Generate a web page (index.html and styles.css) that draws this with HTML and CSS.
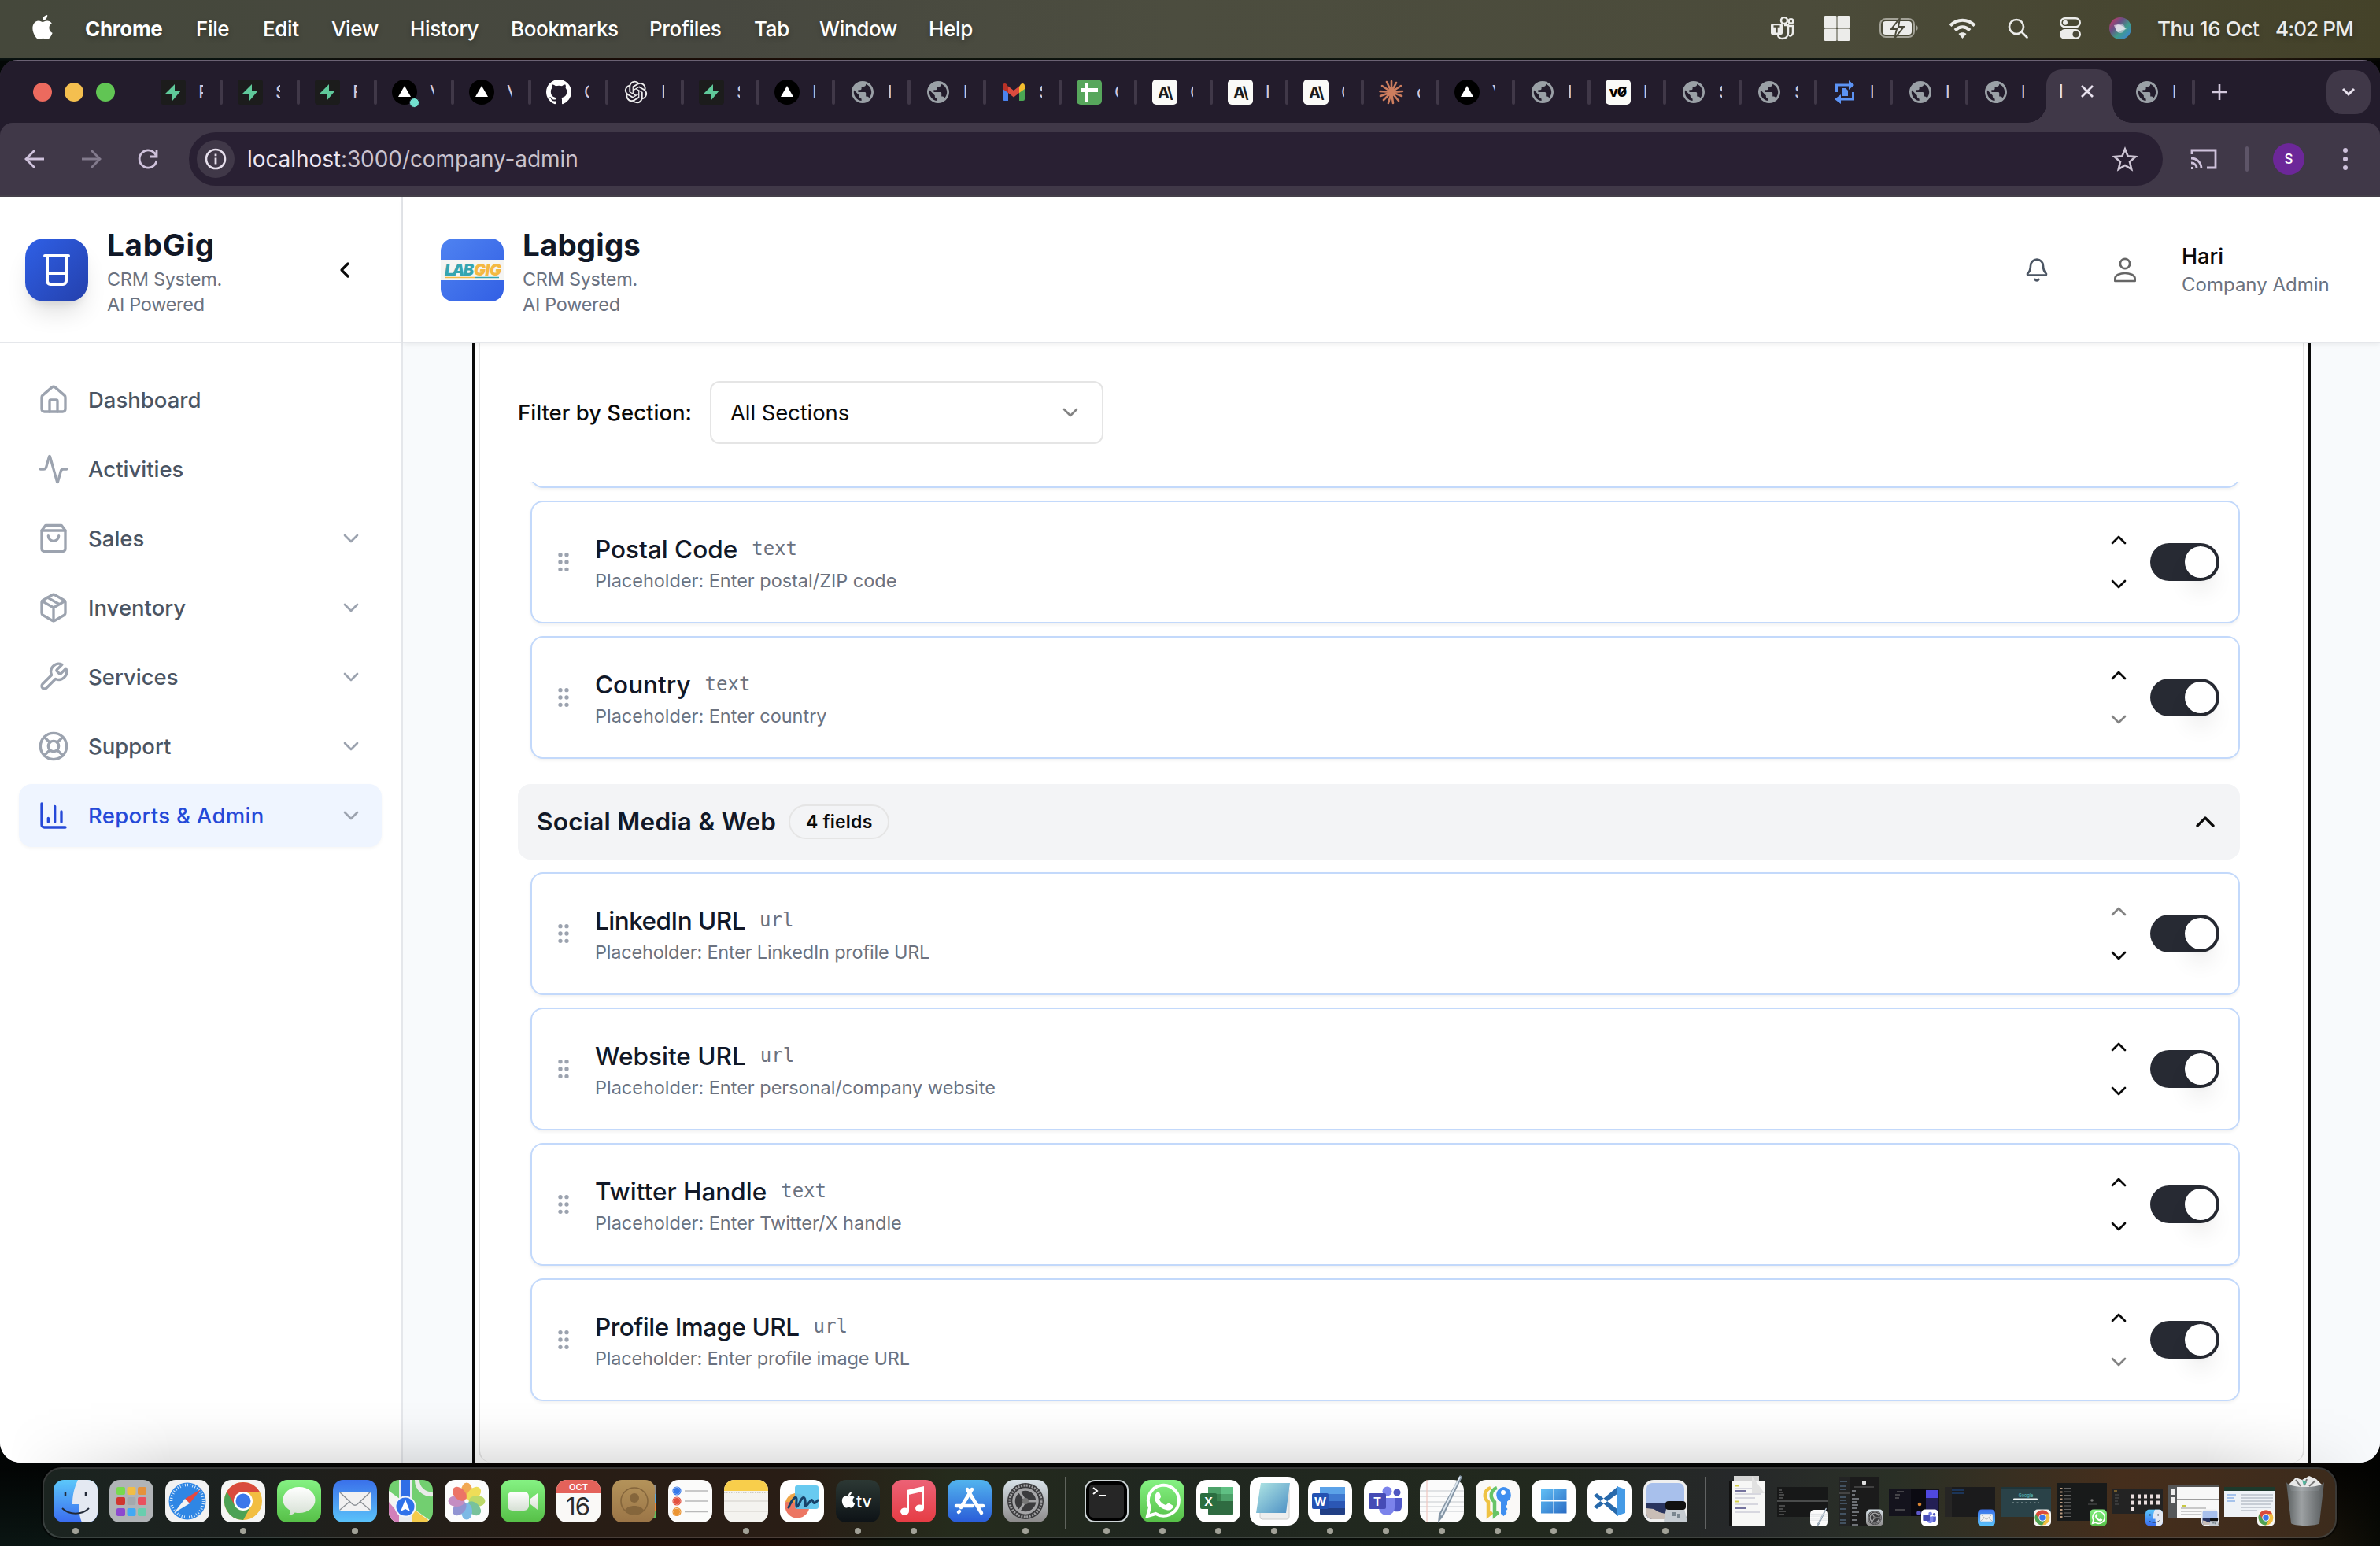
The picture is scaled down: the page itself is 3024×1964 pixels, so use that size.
FILE: index.html
```html
<!DOCTYPE html>
<html lang="en">
<head>
<meta charset="utf-8">
<title>LabGig - Company Admin</title>
<link rel="stylesheet" href="styles.css">
</head>
<body>
<svg class="sprite" aria-hidden="true">
  <defs>
    <linearGradient id="g-blue" x1="0" y1="0" x2="0" y2="1"><stop offset="0" stop-color="#5cc8fa"/><stop offset="1" stop-color="#3a6cf0"/></linearGradient>
    <linearGradient id="g-mail" x1="0" y1="0" x2="0" y2="1"><stop offset="0" stop-color="#3a70ea"/><stop offset="1" stop-color="#5bc3fa"/></linearGradient>
    <linearGradient id="g-green" x1="0" y1="0" x2="0" y2="1"><stop offset="0" stop-color="#85f283"/><stop offset="1" stop-color="#56bf47"/></linearGradient>
    <linearGradient id="g-store" x1="0" y1="0" x2="0" y2="1"><stop offset="0" stop-color="#52b4ee"/><stop offset="1" stop-color="#2a5cd8"/></linearGradient>
    <linearGradient id="g-red" x1="0" y1="0" x2="0" y2="1"><stop offset="0" stop-color="#ec6276"/><stop offset="1" stop-color="#e63c44"/></linearGradient>
    <linearGradient id="g-grey" x1="0" y1="0" x2="0" y2="1"><stop offset="0" stop-color="#d8e2e8"/><stop offset="1" stop-color="#8c8a8a"/></linearGradient>
    <linearGradient id="g-tv" x1="0" y1="0" x2="0" y2="1"><stop offset="0" stop-color="#2c3834"/><stop offset="1" stop-color="#0d1216"/></linearGradient>
    <linearGradient id="g-gold" x1="0" y1="0" x2="0" y2="1"><stop offset="0" stop-color="#b4935a"/><stop offset="1" stop-color="#9b7547"/></linearGradient>
    <linearGradient id="g-white" x1="0" y1="0" x2="0" y2="1"><stop offset="0" stop-color="#fff"/><stop offset="1" stop-color="#d6e0d4"/></linearGradient>
    <linearGradient id="g-win" x1="0" y1="0" x2="1" y2="1"><stop offset="0" stop-color="#62c0f6"/><stop offset="1" stop-color="#2a6cc4"/></linearGradient>
    <linearGradient id="g-note" x1="0" y1="0" x2="1" y2="1"><stop offset="0" stop-color="#b0e6e4"/><stop offset="1" stop-color="#4c8fc4"/></linearGradient>
    <linearGradient id="g-trash" x1="0" y1="0" x2="1" y2="0"><stop offset="0" stop-color="#5c6264"/><stop offset=".4" stop-color="#a2a7aa"/><stop offset="1" stop-color="#5a5f62"/></linearGradient>
    <linearGradient id="g-siri" x1="0" y1="0" x2="1" y2="1"><stop offset="0" stop-color="#d8365c"/><stop offset=".35" stop-color="#6a4f86"/><stop offset=".6" stop-color="#3f9c8a"/><stop offset="1" stop-color="#3b7be8"/></linearGradient>
    <clipPath id="c-app"><rect width="56" height="54" rx="13"/></clipPath>
  </defs>

  <!-- favicons -->
  <symbol id="f-supa" viewBox="0 0 32 32"><rect width="32" height="32" rx="4" fill="#1c1c1c"/><path d="M18 6v8h8L15 27v-9H6z" fill="#5fc99a"/></symbol>
  <symbol id="f-vercel" viewBox="0 0 32 32"><circle cx="16" cy="16" r="16" fill="#000"/><path d="M16 8l8 14H8z" fill="#fff"/></symbol>
  <symbol id="f-github" viewBox="0 0 16 16"><path fill="#fff" d="M8 0C3.580 0 0 3.580 0 8c0 3.540 2.290 6.530 5.470 7.590.4.070.55-.17.55-.38 0-.19-.01-.82-.01-1.490-2.010.37-2.530-.49-2.690-.94-.09-.23-.48-.94-.82-1.130-.28-.15-.68-.52-.01-.53.63-.01 1.080.58 1.230.82.72 1.210 1.870.87 2.330.66.07-.52.28-.87.51-1.070-1.780-.2-3.640-.89-3.640-3.950 0-.87.31-1.590.82-2.150-.08-.2-.36-1.020.08-2.120 0 0 .67-.21 2.200.82.64-.18 1.320-.27 2-.27.68 0 1.360.09 2 .27 1.530-1.040 2.200-.82 2.200-.82.44 1.100.16 1.920.08 2.120.51.56.82 1.270.82 2.150 0 3.070-1.870 3.750-3.650 3.950.29.25.54.73.54 1.480 0 1.070-.01 1.930-.01 2.200 0 .21.15.46.55.38A8.013 8.013 0 0016 8c0-4.420-3.580-8-8-8z"/></symbol>
  <symbol id="f-openai" viewBox="-1.500 -1.500 27 27"><path fill="#eee" d="M22.2819 9.8211a5.9847 5.9847 0 0 0-.5157-4.9108 6.0462 6.0462 0 0 0-6.5098-2.9A6.0651 6.0651 0 0 0 4.9807 4.1818a5.9847 5.9847 0 0 0-3.9977 2.9 6.0462 6.0462 0 0 0 .7427 7.0966 5.98 5.98 0 0 0 .511 4.9107 6.051 6.051 0 0 0 6.5146 2.9001A5.9847 5.9847 0 0 0 13.2599 24a6.0557 6.0557 0 0 0 5.7718-4.2058 5.9894 5.9894 0 0 0 3.9977-2.9001 6.0557 6.0557 0 0 0-.7475-7.0729zm-9.022 12.6081a4.4755 4.4755 0 0 1-2.8764-1.0408l.1419-.0804 4.7783-2.7582a.7948.7948 0 0 0 .3927-.6813v-6.7369l2.02 1.1686a.071.071 0 0 1 .038.052v5.5826a4.504 4.504 0 0 1-4.4945 4.4944zm-9.6607-4.1254a4.4708 4.4708 0 0 1-.5346-3.0137l.142.0852 4.783 2.7582a.7712.7712 0 0 0 .7806 0l5.8428-3.3685v2.3324a.0804.0804 0 0 1-.0332.0615L9.74 19.9502a4.4992 4.4992 0 0 1-6.1408-1.6464zM2.3408 7.8956a4.485 4.485 0 0 1 2.3655-1.9728V11.6a.7664.7664 0 0 0 .3879.6765l5.8144 3.3543-2.0201 1.1685a.0757.0757 0 0 1-.071 0l-4.8303-2.7865A4.504 4.504 0 0 1 2.3408 7.872zm16.5963 3.8558L13.1038 8.364 15.1192 7.2a.0757.0757 0 0 1 .071 0l4.8303 2.7913a4.4944 4.4944 0 0 1-.6765 8.1042v-5.6772a.79.79 0 0 0-.407-.667zm2.0107-3.0231l-.142-.0852-4.7735-2.7818a.7759.7759 0 0 0-.7854 0L9.409 9.2297V6.8974a.0662.0662 0 0 1 .0284-.0615l4.8303-2.7866a4.4992 4.4992 0 0 1 6.6802 4.66zM8.3065 12.863l-2.02-1.1638a.0804.0804 0 0 1-.038-.0567V6.0742a4.4992 4.4992 0 0 1 7.3757-3.4537l-.142.0805L8.704 5.459a.7948.7948 0 0 0-.3927.6813zm1.0976-2.3654l2.602-1.4998 2.6069 1.4998v2.9994l-2.5974 1.4997-2.6067-1.4997Z"/></symbol>
  <symbol id="f-globe" viewBox="0.570 0.570 22.860 22.860"><path fill="#9aa0a6" d="M12 2C6.480 2 2 6.480 2 12s4.480 10 10 10 10-4.480 10-10S17.520 2 12 2zm-1 17.930c-3.950-.49-7-3.850-7-7.930 0-.62.08-1.210.21-1.790L9 15v1c0 1.100.9 2 2 2v1.930zm6.900-2.540c-.26-.81-1-1.390-1.900-1.390h-1v-3c0-.55-.45-1-1-1H8v-2h2c.55 0 1-.45 1-1V7h2c1.100 0 2-.9 2-2v-.41c2.930 1.190 5 4.060 5 7.410 0 2.080-.8 3.970-2.100 5.390z"/></symbol>
  <symbol id="f-gmail" viewBox="0 0 32 32"><path d="M2 8v17a2 2 0 0 0 2 2h5V13z" fill="#4a83ee"/><path d="M30 8v17a2 2 0 0 1-2 2h-5V13z" fill="#4aa553"/><path d="M23 9v8l7-5V8c0-3-3-4-5-2z" fill="#f3bd2e"/><path d="M9 17V8.500l7 5.500 7-5.500V17l-7 5.500z" fill="#dc4b3e"/><path d="M9 9v8l-7-5V8c0-3 3-4 5-2z" fill="#b93227"/></symbol>
  <symbol id="f-sheets" viewBox="0 0 32 32"><rect width="32" height="32" rx="5" fill="#57a65c"/><path d="M11 4h4v7h12v5H15v12h-4V16H5v-5h6z" fill="#fff"/></symbol>
  <symbol id="f-tile" viewBox="0 0 32 32"><rect width="32" height="32" rx="5" fill="#fafaf7"/></symbol>
  <symbol id="f-claude" viewBox="0 0 32 32"><g stroke="#cc7d5e" stroke-width="2.600" stroke-linecap="round"><path d="M16 16L16 2M16 16L22 4M16 16L28 8M16 16L30 15M16 16L29 21M16 16L25 27M16 16L18 30M16 16L12 30M16 16L6 26M16 16L2 21M16 16L1.500 15M16 16L4 8M16 16L10 3"/></g></symbol>
  <symbol id="f-sync" viewBox="0 0 32 32"><g fill="none" stroke="#5c93f5" stroke-width="3"><path d="M5.500 16V7H23M26.500 16v9H9"/></g><path d="M21 1l7 6-7 6zM11 19l-8 6 8 6z" fill="#5c93f5"/><path d="M12 11h5l3 3v7h-8z" fill="#5c93f5"/></symbol>

  <!-- line icons -->
  <symbol id="i-chev-down" viewBox="0 0 24 24"><path d="m6 9 6 6 6-6"/></symbol>
  <symbol id="i-chev-up" viewBox="0 0 24 24"><path d="m18 15-6-6-6 6"/></symbol>
  <symbol id="i-chev-left" viewBox="0 0 24 24"><path d="m15 18-6-6 6-6"/></symbol>
  <symbol id="i-house" viewBox="0 0 24 24"><path d="M15 21v-8a1 1 0 0 0-1-1h-4a1 1 0 0 0-1 1v8"/><path d="M3 10a2 2 0 0 1 .709-1.528l7-5.999a2 2 0 0 1 2.582 0l7 5.999A2 2 0 0 1 21 10v9a2 2 0 0 1-2 2H5a2 2 0 0 1-2-2z"/></symbol>
  <symbol id="i-activity" viewBox="0 0 24 24"><path d="M22 12h-2.480a2 2 0 0 0-1.930 1.460l-2.350 8.360a.25.25 0 0 1-.48 0L9.240 2.180a.25.25 0 0 0-.48 0l-2.350 8.360A2 2 0 0 1 4.490 12H2"/></symbol>
  <symbol id="i-bag" viewBox="0 0 24 24"><path d="M6 2 3 6v14a2 2 0 0 0 2 2h14a2 2 0 0 0 2-2V6l-3-4Z"/><path d="M3 6h18M16 10a4 4 0 0 1-8 0"/></symbol>
  <symbol id="i-package" viewBox="0 0 24 24"><path d="M11 21.730a2 2 0 0 0 2 0l7-4A2 2 0 0 0 21 16V8a2 2 0 0 0-1-1.730l-7-4a2 2 0 0 0-2 0l-7 4A2 2 0 0 0 3 8v8a2 2 0 0 0 1 1.730z"/><path d="M12 22V12M3.300 7 12 12l8.700-5M7.500 4.270l9 5.150"/></symbol>
  <symbol id="i-wrench" viewBox="0 0 24 24"><path d="M14.700 6.300a1 1 0 0 0 0 1.400l1.600 1.600a1 1 0 0 0 1.400 0l3.770-3.770a6 6 0 0 1-7.940 7.940l-6.910 6.910a2.120 2.120 0 0 1-3-3l6.910-6.910a6 6 0 0 1 7.940-7.940l-3.760 3.760z"/></symbol>
  <symbol id="i-buoy" viewBox="0 0 24 24"><circle cx="12" cy="12" r="10"/><circle cx="12" cy="12" r="4"/><path d="m4.930 4.930 4.240 4.240M14.830 9.170l4.240-4.240M14.830 14.830l4.240 4.240M9.170 14.830l-4.240 4.240"/></symbol>
  <symbol id="i-chart" viewBox="0 0 24 24"><path d="M3 3v16a2 2 0 0 0 2 2h16M18 17V9M13 17V5M8 17v-3"/></symbol>
  <symbol id="i-beaker" viewBox="0 0 24 24"><path d="M4.500 3h15M6 3v16a2 2 0 0 0 2 2h8a2 2 0 0 0 2-2V3M6 14h12"/></symbol>
  <symbol id="i-bell" viewBox="0 0 24 24"><path d="M10.268 21a2 2 0 0 0 3.464 0M3.262 15.326A1 1 0 0 0 4 17h16a1 1 0 0 0 .74-1.673C19.410 13.956 18 12.499 18 8A6 6 0 0 0 6 8c0 4.499-1.411 5.956-2.738 7.326"/></symbol>
  <symbol id="i-user" viewBox="0 0 24 24"><circle cx="12" cy="6" r="4.600"/><path d="M2.500 22.500v-2.300c0-3.400 5-5.200 9.500-5.200s9.500 1.800 9.500 5.200v2.300z"/></symbol>
  <symbol id="i-grip" viewBox="0 0 24 24"><g fill="currentColor"><circle cx="9" cy="5" r="1"/><circle cx="9" cy="12" r="1"/><circle cx="9" cy="19" r="1"/><circle cx="15" cy="5" r="1"/><circle cx="15" cy="12" r="1"/><circle cx="15" cy="19" r="1"/></g></symbol>

  <!-- dock applications -->
  <symbol id="d-finder" viewBox="0 0 56 54"><g clip-path="url(#c-app)"><rect width="56" height="54" fill="url(#g-blue)"/><path d="M31 0c-5 11-7 20-7 31h8c0 9 1 16 4 23h20V0z" fill="#e4e9f2"/><path d="M15 15v6M41 15v6" stroke="#222a38" stroke-width="2.500"/><path d="M11 36c9 9 25 9 34 0" fill="none" stroke="#222a38" stroke-width="2"/></g></symbol>
  <symbol id="d-launch" viewBox="0 0 56 54"><rect width="56" height="54" rx="13" fill="#b1b4b7"/><g><rect x="9" y="9" width="11" height="10" rx="2" fill="#77d94e"/><rect x="22.500" y="9" width="11" height="10" rx="2" fill="#f1bd45"/><rect x="36" y="9" width="11" height="10" rx="2" fill="#e5913b"/><rect x="9" y="22" width="11" height="10" rx="2" fill="#d0352f"/><rect x="22.500" y="22" width="11" height="10" rx="2" fill="#a4a9ad"/><rect x="36" y="22" width="11" height="10" rx="2" fill="#e9505f"/><rect x="9" y="36" width="11" height="10" rx="2" fill="#8c48cf"/><rect x="22.500" y="36" width="11" height="10" rx="2" fill="#42a9f4"/><rect x="36" y="36" width="11" height="10" rx="2" fill="#69ceae"/></g></symbol>
  <symbol id="d-safari" viewBox="0 0 56 54"><rect width="56" height="54" rx="13" fill="#f2f2f2"/><circle cx="28" cy="27" r="23.500" fill="#2f86e4"/><circle cx="28" cy="27" r="20.500" fill="none" stroke="#d5e9fb" stroke-width="3.500" stroke-dasharray="1 2.200"/><path d="M45 12L31 30l-6-6z" fill="#e8483f"/><path d="M11 42l14-18 6 6z" fill="#f3f3f3"/></symbol>
  <symbol id="d-chrome" viewBox="0 0 56 54"><rect width="56" height="54" rx="13" fill="#f5f5f4"/><circle cx="28" cy="27" r="24" fill="#f2be42"/><path d="M28 27L7.200 15A24 24 0 0 0 28 51l10-18z" fill="#4da254"/><path d="M28 15h20.800a24 24 0 0 0-41.600 0l10.400 18z" fill="#d94b3d"/><circle cx="28" cy="27" r="12" fill="#fff"/><circle cx="28" cy="27" r="9.500" fill="#3c77ea"/></symbol>
  <symbol id="d-msg" viewBox="0 0 56 54"><rect width="56" height="54" rx="13" fill="url(#g-green)"/><path d="M28 9c11.500 0 20.500 7.200 20.500 16.500S39.500 42 28 42c-1.800 0-3.600-.2-5.300-.6-2 2-5.200 3.600-8.200 3.600 1.800-1.600 2.800-4 2.600-6.200-5.800-2.800-9.600-7.600-9.600-13.300C7.500 16.200 16.500 9 28 9z" fill="url(#g-white)"/></symbol>
  <symbol id="d-mail" viewBox="0 0 56 54"><rect width="56" height="54" rx="13" fill="url(#g-mail)"/><rect x="8" y="15" width="40" height="24" rx="2.500" fill="#f1f1f1"/><path d="M9 16l16 15q3 2.500 6 0l16-15M9 38l13-11M47 38L34 27" fill="none" stroke="#8a8f94" stroke-width="1.400"/></symbol>
  <symbol id="d-maps" viewBox="0 0 56 54"><g clip-path="url(#c-app)"><rect width="56" height="54" fill="#72cf70"/><path d="M0 14L56 54H0z" fill="#f4f4f2"/><path d="M0 28l22 26H0z" fill="#d27fb9"/><path d="M30 36l24 18H30z" fill="#f4cb4b"/><path d="M36 0a18 18 0 0 0 20 18" fill="none" stroke="#e9ebe8" stroke-width="6"/><path d="M13 0h16v54H13z" fill="#e9ecef"/><path d="M15 0h12v26H15z" fill="#2f6ee6"/><circle cx="21" cy="34" r="13.500" fill="#f1f5fb"/><circle cx="21" cy="34" r="11.500" fill="#2f72ea"/><path d="M21 25l6 15-6-3-6 3z" fill="#fff"/></g></symbol>
  <symbol id="d-photos" viewBox="0 0 56 54"><rect width="56" height="54" rx="13" fill="#fcfcfc"/><g opacity=".85"><ellipse cx="28" cy="14" rx="7" ry="10.500" fill="#f09a36"/><ellipse cx="28" cy="14" rx="7" ry="10.500" fill="#ecd83c" transform="rotate(45 28 27)"/><ellipse cx="28" cy="14" rx="7" ry="10.500" fill="#b2d350" transform="rotate(90 28 27)"/><ellipse cx="28" cy="14" rx="7" ry="10.500" fill="#62b98b" transform="rotate(135 28 27)"/><ellipse cx="28" cy="14" rx="7" ry="10.500" fill="#66aee2" transform="rotate(180 28 27)"/><ellipse cx="28" cy="14" rx="7" ry="10.500" fill="#7f83cb" transform="rotate(225 28 27)"/><ellipse cx="28" cy="14" rx="7" ry="10.500" fill="#bb7ab8" transform="rotate(270 28 27)"/><ellipse cx="28" cy="14" rx="7" ry="10.500" fill="#ea5d4d" transform="rotate(315 28 27)"/></g></symbol>
  <symbol id="d-facetime" viewBox="0 0 56 54"><rect width="56" height="54" rx="13" fill="url(#g-green)"/><rect x="9" y="15" width="27" height="24" rx="6" fill="url(#g-white)"/><path d="M38 24l9-7v21l-9-7z" fill="url(#g-white)"/></symbol>
  <symbol id="d-cal" viewBox="0 0 56 54"><g clip-path="url(#c-app)"><rect width="56" height="54" fill="#faf9f7"/><rect width="56" height="17" fill="#e4625a"/></g></symbol>
  <symbol id="d-contacts" viewBox="0 0 56 54"><path d="M46 6h11v12H46z" fill="#8d8d8d"/><path d="M46 18h11v11H46z" fill="#5ba9de"/><path d="M46 29h11v10H46z" fill="#e8893b"/><path d="M46 39h11v9H46z" fill="#62bd5b"/><rect width="54" height="54" rx="12" fill="url(#g-gold)"/><circle cx="28" cy="27" r="17" fill="none" stroke="#85663c" stroke-width="1.600"/><circle cx="28" cy="23" r="6" fill="#85663c"/><path d="M16 39c3-8 21-8 24 0-6 6-18 6-24 0z" fill="#85663c"/></symbol>
  <symbol id="d-remind" viewBox="0 0 56 54"><rect width="56" height="54" rx="13" fill="#fbfbfa"/><path d="M21 14h29M21 27h29M21 40.500h29" stroke="#b9b9b9" stroke-width="1.300"/><g stroke-width="1.200" fill="#3579ea" stroke="#3579ea"><circle cx="11" cy="14" r="3.400"/><circle cx="11" cy="14" r="5" fill="none"/></g><g stroke-width="1.200" fill="#e4513f" stroke="#e4513f"><circle cx="11" cy="27" r="3.400"/><circle cx="11" cy="27" r="5" fill="none"/></g><g stroke-width="1.200" fill="#ec9534" stroke="#ec9534"><circle cx="11" cy="40.500" r="3.400"/><circle cx="11" cy="40.500" r="5" fill="none"/></g></symbol>
  <symbol id="d-notes" viewBox="0 0 56 54"><g clip-path="url(#c-app)"><rect width="56" height="54" fill="#f4f3ef"/><rect width="56" height="14" fill="#f8ce4b"/><path d="M0 16h56" stroke="#a7a49a" stroke-width="1.200" stroke-dasharray="1.500 1.500"/><path d="M0 27h56M0 40h56" stroke="#d2d0ca" stroke-width="1.200"/></g></symbol>
  <symbol id="d-free" viewBox="0 0 56 54"><rect width="56" height="54" rx="13" fill="#fff"/><circle cx="22" cy="33" r="15.500" fill="#ec7663"/><path d="M7 28a15.500 15.500 0 0 1 12-11l4 12z" fill="#efa547"/><rect x="19" y="7" width="30" height="30" rx="3" fill="#5dc6ef" opacity=".93"/><path d="M11 35c5-12 11-17 10-8s1 9 4 2 6-9 7-3-2 8 1 7 6-9 8-7 1 7 7 0" fill="none" stroke="#17426a" stroke-width="3" stroke-linecap="round"/></symbol>
  <symbol id="d-tv" viewBox="0 0 56 54"><rect width="56" height="54" rx="13" fill="url(#g-tv)"/><use href="#apple" x="6" y="15" width="20" height="21" fill="#fff"/></symbol>
  <symbol id="d-music" viewBox="0 0 56 54"><rect width="56" height="54" rx="13" fill="url(#g-red)"/><path d="M39.500 10v26" fill="none" stroke="#fff" stroke-width="3"/><path d="M19 13l22-5v6.500l-22 5z" fill="#fff"/><path d="M20.500 14v25" stroke="#fff" stroke-width="3"/><ellipse cx="16.500" cy="40" rx="5.500" ry="4.500" fill="#fff"/><ellipse cx="35.500" cy="36" rx="5.500" ry="4.500" fill="#fff"/></symbol>
  <symbol id="d-store" viewBox="0 0 56 54"><rect width="56" height="54" rx="13" fill="url(#g-store)"/><g stroke="#fff" stroke-width="4.500" stroke-linecap="round"><path d="M25 12l18 30M31 12L17 35M11 33h21M39 33h6M14 41l1-1"/></g></symbol>
  <symbol id="d-settings" viewBox="0 0 56 54"><rect width="56" height="54" rx="13" fill="url(#g-grey)"/><circle cx="28" cy="27" r="23" fill="#3b3b3d"/><circle cx="28" cy="27" r="20" fill="none" stroke="#a0a0a2" stroke-width="3" stroke-dasharray="2 1.500"/><circle cx="28" cy="27" r="15" fill="none" stroke="#a5a5a7" stroke-width="3.500"/><path d="M28 27h16M28 27L19 13M28 27l-9 14" stroke="#a5a5a7" stroke-width="3"/><circle cx="28" cy="27" r="4" fill="#777"/></symbol>
  <symbol id="d-term" viewBox="0 0 56 54"><rect width="56" height="54" rx="13" fill="#cdd4d6"/><rect x="2" y="2" width="52" height="50" rx="11" fill="#000"/><rect x="6" y="6" width="44" height="42" rx="5" fill="#262626"/><path d="M11 10l5 4-5 4M19 20h8" fill="none" stroke="#fff" stroke-width="2"/></symbol>
  <symbol id="d-wa" viewBox="0 0 56 54"><rect width="56" height="54" rx="13" fill="url(#g-green)"/><path d="M9 46l3-11a19.500 19.500 0 1 1 7.500 8z" fill="none" stroke="#fff" stroke-width="4"/><path d="M20 17c2-3 4-2 5 1l1 3c.5 1.500-2 3-2 4 2 4 5 6 8 7 1 0 3-3 4-2.500l5 3c2 1-1 6-5 6-9 0-18-9-18-16 0-2 1-4 2-5.500z" fill="#fff"/></symbol>
  <symbol id="d-excel" viewBox="0 0 56 54"><rect width="56" height="54" rx="13" fill="#fff"/><rect x="15" y="9" width="32" height="36" rx="2" fill="#2f6b41"/><path d="M15 9h16v9H15z" fill="#4ca169"/><path d="M31 9h16v9H31z" fill="#5fc083"/><path d="M15 18h16v9H15z" fill="#39834f"/><path d="M31 18h16v9H31z" fill="#4ca169"/><rect x="5" y="17" width="21" height="20" rx="2" fill="#2a6e40"/></symbol>
  <symbol id="d-notepad" viewBox="0 0 62 62"><rect width="62" height="62" rx="14" fill="#fff"/><rect x="13" y="14" width="37" height="40" rx="3" fill="#eee" stroke="#ccc"/><path d="M14 8h37l-5 38H8z" fill="url(#g-note)"/></symbol>
  <symbol id="d-word" viewBox="0 0 56 54"><rect width="56" height="54" rx="13" fill="#fff"/><rect x="15" y="9" width="32" height="36" rx="2" fill="#213f85"/><path d="M15 9h32v9H15z" fill="#5ba2e8"/><path d="M15 18h32v9H15z" fill="#3f79d0"/><path d="M15 27h32v9H15z" fill="#2b57b5"/><rect x="5" y="17" width="21" height="20" rx="2" fill="#2352b2"/></symbol>
  <symbol id="d-teams" viewBox="0 0 56 54"><rect width="56" height="54" rx="13" fill="#fff"/><circle cx="42" cy="16" r="4.500" fill="#4f57c1"/><path d="M36 23h12v11c0 7-8 8-12 4z" fill="#5059c9"/><circle cx="29.500" cy="14.500" r="6" fill="#7b83eb"/><path d="M19 23h20v12c0 13-20 13-20 0z" fill="#7b83eb"/><rect x="6" y="17" width="22" height="20" rx="2" fill="#464bb5"/></symbol>
  <symbol id="d-textedit" viewBox="0 -7 56 63"><rect width="56" height="54" rx="13" fill="#fbfbfb"/><path d="M0 14h56M0 21h56M0 28h56M0 34h56M0 40h56" stroke="#c5c9ce" stroke-width="1.200"/><path d="M9 0v54" stroke="#f0c6c0" stroke-width="1.200"/><path d="M51-6l3 2-24 50-7 9 1-11z" fill="#8394a4"/><path d="M51-4L27 45" stroke="#dbe5ee" stroke-width="2"/></symbol>
  <symbol id="d-keys" viewBox="0 0 56 54"><rect width="56" height="54" rx="13" fill="#faf9f7"/><path d="M19 10c-8 3-10 12-3 18v17l5-4" fill="none" stroke="#efc343" stroke-width="4.500"/><path d="M27 10c-8 3-10 12-3 18v17l5-4" fill="none" stroke="#67c466" stroke-width="4.500"/><path d="M35 9a10 10 0 0 1 5 18.500v4l-2 2.500 2.500 3-2.500 3 1.500 2-4 4-3.500-3V28A10 10 0 0 1 35 9z" fill="#3f8ff0"/><circle cx="35" cy="16" r="3" fill="#fff"/></symbol>
  <symbol id="d-windows" viewBox="0 0 56 54"><rect width="56" height="54" rx="13" fill="#fff"/><path d="M12 11h15.500v15H12zM29 11h15.500v15H29zM12 27.500h15.500v15H12zM29 27.500h15.500v15H29z" fill="url(#g-win)"/></symbol>
  <symbol id="d-code" viewBox="0 0 56 54"><rect width="56" height="54" rx="13" fill="#fff"/><path d="M8 20l4-3 27 21v8zM8 34l4 3 27-20V8z" fill="#2769ab"/><path d="M37 8l11 4v30l-11 4z" fill="#459be6"/></symbol>
  <symbol id="d-preview" viewBox="0 0 56 54"><rect width="56" height="54" rx="13" fill="#efefef"/><rect x="4" y="4" width="48" height="46" rx="7" fill="#a8c0ec"/><path d="M4 29h48v14a7 7 0 0 1-7 7H11a7 7 0 0 1-7-7z" fill="#28345f"/><path d="M4 36l9 1 7 4 8 2v7H11a7 7 0 0 1-7-7z" fill="#c8bdb6"/><path d="M29 37h23l4 15c0 4-30 4-30 0z" fill="#c6ccd2"/><rect x="28" y="27" width="26" height="11" rx="4" fill="#111"/><path d="M36 41h6v5h-6zM43 43h4v5h-4z" fill="#7b8790"/></symbol>
  <symbol id="apple" viewBox="0 0 24 24"><path d="M12.152 6.896c-.948 0-2.415-1.078-3.960-1.040-2.040.027-3.910 1.183-4.961 3.014-2.117 3.675-.546 9.103 1.519 12.090 1.013 1.454 2.208 3.090 3.792 3.039 1.520-.065 2.090-.987 3.935-.987 1.831 0 2.350.987 3.960.948 1.637-.026 2.676-1.480 3.676-2.948 1.156-1.688 1.636-3.325 1.662-3.415-.039-.013-3.182-1.221-3.220-4.857-.026-3.040 2.480-4.494 2.597-4.559-1.429-2.090-3.623-2.324-4.390-2.376-2-.156-3.675 1.090-4.610 1.090zM15.530 3.830c.843-1.012 1.400-2.427 1.245-3.830-1.207.052-2.662.805-3.532 1.818-.78.896-1.454 2.338-1.273 3.714 1.338.104 2.715-.688 3.559-1.701"/></symbol>
</svg>

<div class="desktop">
  <header class="menubar">
    <svg class="menubar-apple"><use href="#apple"/></svg>
    <nav class="menubar-items"><b>Chrome</b><span>File</span><span>Edit</span><span>View</span><span>History</span><span>Bookmarks</span><span>Profiles</span><span>Tab</span><span>Window</span><span>Help</span></nav>
    <div class="menubar-status">
      <svg width="30" height="30" viewBox="0 0 30 30"><g fill="none" stroke="#ececea" stroke-width="2.500"><circle cx="17" cy="5" r="4"/><circle cx="25.500" cy="6" r="2.800"/><path d="M17 11h5v10c0 9-13 9-13 2M23 12h5v8c0 4-3 5-5 4"/></g><rect y="9" width="15" height="14" rx="2" fill="#ececea"/><path d="M3.500 12.500h8M7.500 12.500v8" stroke="#4b4a3a" stroke-width="2.300"/></svg>
      <svg width="32" height="32" viewBox="0 0 32 32" fill="#ececea"><rect width="15.500" height="15.500" rx="1"/><rect x="16.500" width="15.500" height="15.500" rx="1"/><rect y="16.500" width="15.500" height="15.500" rx="1"/><rect x="16.500" y="16.500" width="15.500" height="15.500" rx="1"/></svg>
      <svg width="50" height="26" viewBox="0 0 50 26"><rect x="1" y="1" width="43" height="23" rx="7" fill="none" stroke="#a3a297" stroke-width="2"/><rect x="4" y="4" width="37" height="17" rx="4" fill="#ececea"/><path d="M46.500 9c3 1 3 6 0 7z" fill="#a3a297"/><path d="M26 0L15 14h7l-3 12 12-15h-7z" fill="#ececea" stroke="#4b4a3a" stroke-width="2"/></svg>
      <svg width="35" height="26" viewBox="0 0 35 26"><g fill="none" stroke="#ececea" stroke-width="4.200"><path d="M2 9.500c9-9 22-9 31 0M8 15.500c6-5.500 13-5.500 19 0"/></g><path d="M17.500 26l-5-6c3-2.500 7-2.500 10 0z" fill="#ececea"/></svg>
      <svg width="27" height="27" viewBox="0 0 27 27" fill="none" stroke="#ececea" stroke-width="2.700" stroke-linecap="round"><circle cx="11" cy="11" r="9"/><path d="M17.500 17.500l7 7"/></svg>
      <svg width="27" height="28" viewBox="0 0 27 28"><rect x="1.200" y="1.200" width="24.600" height="11" rx="5.500" fill="none" stroke="#ececea" stroke-width="2.400"/><circle cx="7" cy="6.700" r="3" fill="#ececea"/><rect y="15" width="27" height="13" rx="6.500" fill="#ececea"/><circle cx="20.500" cy="21.500" r="4" fill="#4a4938"/></svg>
      <svg width="28" height="28" viewBox="0 0 28 28"><circle cx="14" cy="14" r="14" fill="url(#g-siri)"/><circle cx="14" cy="14" r="6" fill="#e8d4ea" opacity=".55"/><path d="M6 10q8-3 16 5-8 1-10 4-4-2-6-9z" fill="#fff" opacity=".6"/></svg>
      <span class="menubar-date">Thu 16 Oct</span><span class="menubar-time">4:02 PM</span>
    </div>
  </header>

  <section class="window">
    <div class="tabstrip">
      <div class="lights"><i class="light red"></i><i class="light yellow"></i><i class="light green"></i></div>
      <div class="tabs">
        <div class="tab wide"><svg><use href="#f-supa"/></svg><span>P</span></div>
        <div class="tab wide"><svg><use href="#f-supa"/></svg><span>S</span></div>
        <div class="tab wide"><svg><use href="#f-supa"/></svg><span>F</span></div>
        <div class="tab wide notify"><svg><use href="#f-vercel"/></svg><span>V</span></div>
        <div class="tab wide"><svg><use href="#f-vercel"/></svg><span>V</span></div>
        <div class="tab wide"><svg><use href="#f-github"/></svg><span>G</span></div>
        <div class="tab"><svg><use href="#f-openai"/></svg><span>I</span></div>
        <div class="tab"><svg><use href="#f-supa"/></svg><span>S</span></div>
        <div class="tab"><svg><use href="#f-vercel"/></svg><span>I</span></div>
        <div class="tab"><svg><use href="#f-globe"/></svg><span>l</span></div>
        <div class="tab"><svg><use href="#f-globe"/></svg><span>l</span></div>
        <div class="tab"><svg><use href="#f-gmail"/></svg><span>S</span></div>
        <div class="tab"><svg><use href="#f-sheets"/></svg><span>C</span></div>
        <div class="tab"><svg viewBox="0 0 32 32"><use href="#f-tile"/><text class="fav-a" x="16" y="23.500">A\</text></svg><span>C</span></div>
        <div class="tab"><svg viewBox="0 0 32 32"><use href="#f-tile"/><text class="fav-a" x="16" y="23.500">A\</text></svg><span>l</span></div>
        <div class="tab"><svg viewBox="0 0 32 32"><use href="#f-tile"/><text class="fav-a" x="16" y="23.500">A\</text></svg><span>C</span></div>
        <div class="tab"><svg><use href="#f-claude"/></svg><span>c</span></div>
        <div class="tab"><svg><use href="#f-vercel"/></svg><span>V</span></div>
        <div class="tab"><svg><use href="#f-globe"/></svg><span>l</span></div>
        <div class="tab"><svg viewBox="0 0 32 32"><use href="#f-tile"/><text class="fav-v" x="15.500" y="22">v0</text><path d="M18 21l8-11" stroke="#000" stroke-width="2"/></svg><span>l</span></div>
        <div class="tab"><svg><use href="#f-globe"/></svg><span>S</span></div>
        <div class="tab"><svg><use href="#f-globe"/></svg><span>S</span></div>
        <div class="tab"><svg><use href="#f-sync"/></svg><span>l</span></div>
        <div class="tab"><svg><use href="#f-globe"/></svg><span>l</span></div>
        <div class="tab last"><svg><use href="#f-globe"/></svg><span>l</span></div>
      </div>
      <div class="tab-active"><span>l</span><svg width="18" height="18" viewBox="0 0 18 18"><path d="M2 2l14 14M16 2L2 16" stroke="#e9e3ef" stroke-width="2.800"/></svg></div>
      <div class="tab"><svg><use href="#f-globe"/></svg><span>l</span></div>
      <svg class="tab-new" viewBox="0 0 22 22"><path d="M11 1v20M1 11h20" stroke="#d3c9dd" stroke-width="2.600"/></svg>
      <div class="tab-search"><svg width="18" height="12" viewBox="0 0 18 12"><path d="M2 2l7 7 7-7" fill="none" stroke="#e9e3ef" stroke-width="3"/></svg></div>
    </div>

    <div class="toolbar">
      <div class="toolbar-nav">
        <svg width="28" height="28" viewBox="0 0 28 28" class="tool"><path d="M26 14H3M14 3L3 14l11 11"/></svg>
        <svg width="28" height="28" viewBox="0 0 28 28" class="tool dim"><path d="M2 14h23M14 3l11 11-11 11"/></svg>
        <svg width="28" height="28" viewBox="0 0 28 28" class="tool"><path d="M24 9A11 11 0 1 0 25 16M25 2v9h-9"/></svg>
      </div>
      <div class="omnibox">
        <span class="omnibox-info"><svg width="28" height="28" viewBox="0 0 28 28"><circle cx="14" cy="14" r="12" fill="none" stroke="#e6dfec" stroke-width="2.600"/><path d="M14 12.500v8M14 7.500v2.700" stroke="#e6dfec" stroke-width="2.800"/></svg></span>
        <span class="omnibox-url"><em>localhost</em>:3000/company-admin</span>
        <svg class="omnibox-star" viewBox="0 0 32 32"><path d="M16 3.500l3.700 8.900 9.600.8-7.300 6.300 2.200 9.400-8.200-5-8.200 5 2.200-9.400-7.300-6.300 9.600-.8z" fill="none" stroke="#cdc5d4" stroke-width="2.600"/></svg>
      </div>
      <svg class="tool cast" viewBox="0 0 34 26"><path d="M2 7V2h30v22H21M1 24.500h2M1 18a6.500 6.500 0 0 1 7 7M1 12a13 13 0 0 1 13 13"/></svg>
      <i class="toolbar-sep"></i>
      <span class="avatar">S</span>
      <span class="kebab"><i></i><i></i><i></i></span>
    </div>

    <div class="app">
      <aside class="sidebar">
        <div class="brand">
          <div class="brand-logo"><svg class="line"><use href="#i-beaker"/></svg></div>
          <div class="brand-text"><h1 class="t-labgig">LabGig</h1><p>CRM System.<br>AI Powered</p></div>
          <svg class="line brand-collapse"><use href="#i-chev-left"/></svg>
        </div>
        <nav class="nav">
          <a class="nav-item"><svg class="line"><use href="#i-house"/></svg><span>Dashboard</span></a>
          <a class="nav-item"><svg class="line"><use href="#i-activity"/></svg><span>Activities</span></a>
          <a class="nav-item"><svg class="line"><use href="#i-bag"/></svg><span>Sales</span><svg class="line chev"><use href="#i-chev-down"/></svg></a>
          <a class="nav-item"><svg class="line"><use href="#i-package"/></svg><span>Inventory</span><svg class="line chev"><use href="#i-chev-down"/></svg></a>
          <a class="nav-item"><svg class="line"><use href="#i-wrench"/></svg><span>Services</span><svg class="line chev"><use href="#i-chev-down"/></svg></a>
          <a class="nav-item"><svg class="line"><use href="#i-buoy"/></svg><span>Support</span><svg class="line chev"><use href="#i-chev-down"/></svg></a>
          <a class="nav-item active"><svg class="line"><use href="#i-chart"/></svg><span>Reports &amp; Admin</span><svg class="line chev"><use href="#i-chev-down"/></svg></a>
        </nav>
      </aside>

      <div class="content">
        <header class="topbar">
          <svg class="company-logo" viewBox="0 0 80 80"><defs><linearGradient id="g-co" x1="0" y1="0" x2="1" y2="1"><stop offset="0" stop-color="#4f83f1"/><stop offset="1" stop-color="#325fe4"/></linearGradient></defs><rect width="80" height="80" rx="16" fill="url(#g-co)"/><rect y="27" width="80" height="26" fill="#f5f5f3"/><text class="co-a" x="5" y="47" textLength="37">LAB</text><text class="co-b" x="42" y="47" textLength="35">GIG</text><path d="M5 49.500h38" stroke="#f4b942" stroke-width="1.500"/><path d="M43 49.500h31" stroke="#35a5b0" stroke-width="1.500"/></svg>
          <div class="brand-text"><h1 class="t-labgigs">Labgigs</h1><p>CRM System.<br>AI Powered</p></div>
          <div class="account">
            <svg class="line bell"><use href="#i-bell"/></svg>
            <svg class="line person"><use href="#i-user"/></svg>
            <div class="account-text"><strong>Hari</strong><span>Company Admin</span></div>
          </div>
        </header>

        <main class="main">
          <div class="frame"><div class="panel">
            <div class="filter">
              <label>Filter by Section:</label>
              <div class="select"><span>All Sections</span><svg class="line"><use href="#i-chev-down"/></svg></div>
            </div>
            <div class="fields">
              <div class="field field-cut"></div>
              <div class="field"><svg class="line grip"><use href="#i-grip"/></svg><div class="field-text"><div class="field-title"><h3>Postal Code</h3><code>text</code></div><p>Placeholder: Enter postal/ZIP code</p></div><div class="order"><svg class="line"><use href="#i-chev-up"/></svg><svg class="line"><use href="#i-chev-down"/></svg></div><div class="toggle"><i></i></div></div>
              <div class="field"><svg class="line grip"><use href="#i-grip"/></svg><div class="field-text"><div class="field-title"><h3>Country</h3><code>text</code></div><p>Placeholder: Enter country</p></div><div class="order"><svg class="line"><use href="#i-chev-up"/></svg><svg class="line off"><use href="#i-chev-down"/></svg></div><div class="toggle"><i></i></div></div>
              <div class="section"><h2>Social Media &amp; Web</h2><span class="badge">4 fields</span><svg class="line"><use href="#i-chev-up"/></svg></div>
              <div class="field tight"><svg class="line grip"><use href="#i-grip"/></svg><div class="field-text"><div class="field-title"><h3>LinkedIn URL</h3><code>url</code></div><p>Placeholder: Enter LinkedIn profile URL</p></div><div class="order"><svg class="line off"><use href="#i-chev-up"/></svg><svg class="line"><use href="#i-chev-down"/></svg></div><div class="toggle"><i></i></div></div>
              <div class="field"><svg class="line grip"><use href="#i-grip"/></svg><div class="field-text"><div class="field-title"><h3>Website URL</h3><code>url</code></div><p>Placeholder: Enter personal/company website</p></div><div class="order"><svg class="line"><use href="#i-chev-up"/></svg><svg class="line"><use href="#i-chev-down"/></svg></div><div class="toggle"><i></i></div></div>
              <div class="field"><svg class="line grip"><use href="#i-grip"/></svg><div class="field-text"><div class="field-title"><h3>Twitter Handle</h3><code>text</code></div><p>Placeholder: Enter Twitter/X handle</p></div><div class="order"><svg class="line"><use href="#i-chev-up"/></svg><svg class="line"><use href="#i-chev-down"/></svg></div><div class="toggle"><i></i></div></div>
              <div class="field tight"><svg class="line grip"><use href="#i-grip"/></svg><div class="field-text"><div class="field-title"><h3>Profile Image URL</h3><code>url</code></div><p>Placeholder: Enter profile image URL</p></div><div class="order"><svg class="line"><use href="#i-chev-up"/></svg><svg class="line off"><use href="#i-chev-down"/></svg></div><div class="toggle"><i></i></div></div>
            </div>
          </div></div>
        </main>
      </div>
    </div>
    <div class="window-shade"></div>
  </section>

  <footer class="dock">
    <div class="slot open"><svg><use href="#d-finder"/></svg></div>
    <div class="slot"><svg><use href="#d-launch"/></svg></div>
    <div class="slot"><svg><use href="#d-safari"/></svg></div>
    <div class="slot open"><svg><use href="#d-chrome"/></svg></div>
    <div class="slot"><svg><use href="#d-msg"/></svg></div>
    <div class="slot open"><svg><use href="#d-mail"/></svg></div>
    <div class="slot"><svg><use href="#d-maps"/></svg></div>
    <div class="slot"><svg><use href="#d-photos"/></svg></div>
    <div class="slot"><svg><use href="#d-facetime"/></svg></div>
    <div class="slot"><svg viewBox="0 0 56 54"><use href="#d-cal"/><text class="cal-month" x="28" y="13">OCT</text><text class="cal-day" x="27" y="45">16</text></svg></div>
    <div class="slot"><svg><use href="#d-contacts"/></svg></div>
    <div class="slot"><svg><use href="#d-remind"/></svg></div>
    <div class="slot open"><svg><use href="#d-notes"/></svg></div>
    <div class="slot"><svg><use href="#d-free"/></svg></div>
    <div class="slot open"><svg viewBox="0 0 56 54"><use href="#d-tv"/><text class="tv" x="26" y="35">tv</text></svg></div>
    <div class="slot open"><svg><use href="#d-music"/></svg></div>
    <div class="slot"><svg><use href="#d-store"/></svg></div>
    <div class="slot open"><svg><use href="#d-settings"/></svg></div>
    <i class="dock-sep"></i>
    <div class="slot open"><svg><use href="#d-term"/></svg></div>
    <div class="slot open"><svg><use href="#d-wa"/></svg></div>
    <div class="slot open"><svg viewBox="0 0 56 54"><use href="#d-excel"/><text class="office" x="15.500" y="32.500">X</text></svg></div>
    <div class="slot open"><svg class="big"><use href="#d-notepad"/></svg></div>
    <div class="slot open"><svg viewBox="0 0 56 54"><use href="#d-word"/><text class="office" x="15.500" y="32.500">W</text></svg></div>
    <div class="slot open"><svg viewBox="0 0 56 54"><use href="#d-teams"/><text class="office" x="17" y="32.500">T</text></svg></div>
    <div class="slot open"><svg class="tall"><use href="#d-textedit"/></svg></div>
    <div class="slot open"><svg><use href="#d-keys"/></svg></div>
    <div class="slot open"><svg><use href="#d-windows"/></svg></div>
    <div class="slot open"><svg><use href="#d-code"/></svg></div>
    <div class="slot open"><svg><use href="#d-preview"/></svg></div>
    <i class="dock-sep"></i>
    <div class="slot"><svg class="mini" viewBox="0 0 64 64"><path d="M16 0h32v12H16z" fill="#d4d4d4"/><path d="M10 7h4v57h-4z" fill="#111"/><path d="M14 7h41v57H14z" fill="#f7f7f6"/><path d="M17 12.500h5M17 32.500h5" stroke="#d4cf4a" stroke-width="2"/><path d="M17 19h14M17 41h14" stroke="#4a4780" stroke-width="1.600"/><path d="M17 16h28M17 23h33M17 28h26M17 36h30M17 46h32" stroke="#b7b7c8" stroke-width="1"/><path d="M39 0l16 22H39z" fill="#e1e1e1"/></svg></div>
    <div class="slot"><svg class="mini" viewBox="0 0 64 64"><rect y="14" width="64" height="38" fill="#171818"/><path d="M0 31.500h64" stroke="#4a4c4c" stroke-width="3"/><path d="M2 18h4M2 21h6M2 24h7M2 28h5M2 38h8M2 42h6M2 45h9M2 49h7" stroke="#7b7b7b"/><use href="#d-textedit" x="42" y="40" width="22" height="25"/></svg></div>
    <div class="slot"><svg class="mini" viewBox="0 0 64 64"><rect x="7" y="1" width="51" height="63" fill="#232424"/><path d="M22 1h36v63H22z" fill="#1b1b1b"/><path d="M9 7h9M9 13h8M9 17h7M9 27h8M9 31h8M9 35h9M9 42h7M9 48h8M9 56h7M9 60h8" stroke="#4f6276" stroke-width="1.500"/><path d="M7 22h14" stroke="#444" stroke-width="2"/><path d="M24 19h5M24 24h4M24 29h9M24 33h6M24 37h8M24 41h7M24 46h9M24 50h6M24 56h7M24 62h8" stroke="#8a8f95" stroke-width="1.300"/><rect x="37" y="6" width="5" height="5" rx="1" fill="#ddd"/><path d="M27 14h25" stroke="#666"/><use href="#d-settings" x="42" y="42" width="22" height="22"/></svg></div>
    <div class="slot"><svg class="mini" viewBox="0 0 64 64"><rect y="16" width="64" height="35" fill="#14131d"/><path d="M28 17h19v34H28z" fill="#0b0a12"/><path d="M47 18h16l-1 12H47z" fill="#5048e0"/><path d="M47 28h16v22H47z" fill="#231f55"/><circle cx="39" cy="36" r="2.300" fill="#d98432"/><circle cx="38" cy="47" r="2.800" fill="#5e58c8"/><path d="M10 20h9M8 24h6M8 28h5M8 43h13" stroke="#777"/><use href="#d-teams" x="41" y="42" width="22" height="22"/></svg></div>
    <div class="slot"><svg class="mini" viewBox="0 0 64 64"><rect y="14" width="64" height="38" fill="#1b1b1c"/><path d="M0 14h9v38H0z" fill="#262524"/><path d="M9 18h16M9 22h15" stroke="#1c3558" stroke-width="2"/><use href="#d-mail" x="42" y="42" width="22" height="22"/></svg></div>
    <div class="slot"><svg class="mini" viewBox="0 0 64 64"><rect y="14" width="64" height="38" fill="#2a4248"/><rect y="14" width="64" height="3" fill="#1f3539"/><rect x="16" y="28.500" width="31" height="2.200" rx="1" fill="#f0f4f4"/><text class="goog" x="32" y="26.500">Google</text><path d="M15 34h34" stroke="#9aa" stroke-dasharray="2 3.500"/><use href="#d-chrome" x="42" y="42" width="22" height="22"/></svg></div>
    <div class="slot"><svg class="mini" viewBox="0 0 64 64"><rect y="9" width="64" height="48" fill="#181a1a"/><path d="M6 15v40" stroke="#b99a80" stroke-width="3" stroke-dasharray="2 2.500"/><path d="M14 15v40" stroke="#666" stroke-width="8" stroke-dasharray="1 3.500"/><circle cx="45" cy="31" r="1.800" fill="#777"/><path d="M40 36h11" stroke="#555"/><use href="#d-wa" x="42" y="42" width="22" height="22"/></svg></div>
    <div class="slot"><svg class="mini" viewBox="0 0 64 64"><rect y="17" width="64" height="31" fill="#232323"/><path d="M2 19h4" stroke="#c99b3a"/><path d="M3 24h5M3 28h5M3 32h4M3 36h5" stroke="#555"/><path d="M24 26h38M24 34h38M24 42h6" stroke="#e9dede" stroke-width="5" stroke-dasharray="4 4"/><use href="#d-finder" x="42" y="42" width="22" height="22"/></svg></div>
    <div class="slot"><svg class="mini" viewBox="0 0 64 64"><rect y="12" width="64" height="42" fill="#f8f8f8"/><path d="M0 12h11v42H0z" fill="#55585a"/><path d="M3 17h5v7H3zM3 27h5v7H3z" fill="#eee"/><path d="M11 30h53" stroke="#444"/><path d="M0 13h64" stroke="#555" stroke-width="2"/><path d="M17 38h6" stroke="#c7c842" stroke-width="2"/><path d="M16 41h32M16 45h30M16 49h28" stroke="#999"/><use href="#d-preview" x="42" y="42" width="22" height="22"/></svg></div>
    <div class="slot"><svg class="mini" viewBox="0 0 64 64"><rect y="14" width="64" height="38" fill="#eef2f6"/><rect y="14" width="64" height="5" fill="#1d3a2c"/><path d="M22 24h40M22 28h40M22 32h40M22 36h38M22 40h38M22 44h20" stroke="#9fa8b4"/><path d="M3 24h12M3 28h10M3 32h11" stroke="#8fb4e8" stroke-width="1.500"/><use href="#d-chrome" x="42" y="42" width="22" height="22"/></svg></div>
    <div class="slot"><svg class="mini" viewBox="0 0 64 64"><path d="M12 10l8-8 8 3 9-5 9 4 7 7-4 8H14z" fill="#e7e8e8"/><path d="M20 5l6 8M34 4l-3 8M45 6l-8 7" stroke="#777" stroke-width="2"/><path d="M28 5l6 3-4 4z" fill="#53b39b"/><path d="M8 8l6 52c2 4 34 4 36 0l6-52c-4 8-44 8-48 0z" fill="url(#g-trash)" opacity=".95"/></svg></div>
  </footer>
</div>
</body>
</html>
```

FILE: styles.css
```css
* { box-sizing: border-box; }

html, body { margin: 0; padding: 0; }

body {
  width: 3024px;
  height: 1964px;
  overflow: hidden;
  font-family: "Inter", "Liberation Sans", sans-serif;
  -webkit-font-smoothing: antialiased;
}

h1, h2, h3, p { margin: 0; font-weight: inherit; }

.sprite { position: absolute; width: 0; height: 0; }

.desktop {
  display: flex;
  flex-direction: column;
  width: 3024px;
  height: 1964px;
  background:
    linear-gradient(180deg, transparent 70px, rgba(0, 0, 0, .8) 78px, rgba(0, 0, 0, .85) 1868px, rgba(0, 0, 0, .35) 1964px),
    linear-gradient(90deg, #10211d 0, #12241c 350px, #2a150c 560px, #33180c 1000px, #1b2414 1130px, #17251d 1500px, #1f2c1a 1900px, #1a2219 2200px, #20302c 2500px, #3a2716 2680px, #4a3019 2850px, #0d1008 3024px);
}

/* macOS menu bar */
.menubar {
  display: flex;
  align-items: center;
  height: 74px;
  padding: 0 34px 2px 38px;
  background: linear-gradient(90deg, #45483b 0, #474840 900px, #4c4d3f 1500px, #4b4b3a 2300px, #444229 3024px);
  color: #fff;
  font-size: 26px;
  font-weight: 500;
  letter-spacing: -.35px;
  text-shadow: 0 3px 6px rgba(0, 0, 0, .25);
}
.menubar-apple { width: 32px; height: 31px; fill: #fff; margin-right: 38px; margin-top: -4px; }
.menubar-items { display: grid; grid-template-columns: 141px 85px 87px 100px 128px 176px 133px 83px 139px 60px; }
.menubar-items b { font-weight: 700; }
.menubar-status {
  display: grid;
  grid-template-columns: 68px 70px 88px 75px 66px 63px 61px 150px 99px;
  align-items: center;
  margin-left: auto;
  color: #ececea;
  white-space: nowrap;
}
.menubar-time { letter-spacing: -.9px; }

/* browser window */
.window {
  position: relative;
  display: flex;
  flex-direction: column;
  height: 1782px;
  margin-top: 2px;
  border-radius: 22px 22px 26px 26px;
  overflow: hidden;
  background: #403848;
}
.tabstrip {
  position: relative;
  z-index: 1;
  display: flex;
  align-items: center;
  flex: none;
  height: 80px;
  padding-left: 42px;
  background: #231c2c;
  border-top: 2px solid #6b6274;
}
.lights { display: flex; gap: 16px; width: 162px; }
.light { width: 24px; height: 24px; border-radius: 50%; }
.red { background: #ec6a5e; }
.yellow { background: #f4bf4f; }
.green { background: #61c554; }
.tabs { display: flex; }
.tab { position: relative; display: flex; align-items: center; width: 96px; height: 32px; color: #d3c9dd; }
.tab svg { width: 32px; height: 32px; }
.tab span { width: 4px; margin-left: 16px; overflow: hidden; font-size: 23px; line-height: 32px; }
.tab.wide { width: 98px; }
.tab.wide span { width: 6px; }
.tab::after { content: ""; width: 4px; height: 32px; margin: 0 19px 0 auto; border-radius: 2px; background: #403848; }
.tab.last { width: 80px; }
.tab.last::after { display: none; }
.notify::before { content: ""; position: absolute; left: 22px; top: 23px; width: 11px; height: 11px; border-radius: 50%; background: #73e0cf; border: 1px solid #231c2c; }
.fav-a { font-weight: 700; font-size: 20px; letter-spacing: -1.500px; text-anchor: middle; fill: #1b1b1b; }
.fav-v { font-weight: 800; font-size: 18px; letter-spacing: -1px; text-anchor: middle; fill: #000; }
.tab-active {
  position: relative;
  display: flex;
  align-items: center;
  align-self: flex-end;
  gap: 21px;
  width: 84px;
  height: 68px;
  margin-right: 28px;
  padding: 0 0 12px 16px;
  border-radius: 20px 20px 0 0;
  background: #403848;
  color: #e9e3ef;
}
.tab-active span { width: 6px; overflow: hidden; font-size: 23px; line-height: 32px; }
.tab-active::before, .tab-active::after { content: ""; position: absolute; bottom: 0; width: 24px; height: 24px; }
.tab-active::before { left: -24px; background: radial-gradient(circle at 0 0, transparent 23.500px, #403848 24px); }
.tab-active::after { right: -24px; background: radial-gradient(circle at 100% 0, transparent 23.500px, #403848 24px); }
.tab-new { width: 22px; height: 22px; margin-left: 1px; }
.tab-search { display: grid; place-items: center; width: 56px; height: 56px; margin: 0 12px 0 auto; border-radius: 20px; background: #403848; }

.toolbar { display: flex; align-items: center; flex: none; height: 94px; padding: 0 41px 0 30px; border-radius: 16px 16px 0 0; background: #403848; box-shadow: 0 -20px 0 #231c2c; border-bottom: 2px solid #45404a; }
.tool { fill: none; stroke: #cfc2dc; stroke-width: 2.800; }
.tool.dim { stroke: #827a8c; }
.toolbar-nav { display: flex; gap: 44px; width: 210px; }
.omnibox { display: flex; align-items: center; width: 2508px; height: 68px; padding: 0 32px 0 10px; border-radius: 34px; background: #292033; }
.omnibox-info { display: grid; place-items: center; width: 48px; height: 48px; border-radius: 50%; background: #403848; }
.omnibox-url { margin-left: 16px; font-size: 28px; letter-spacing: -.08px; color: #c9c3ce; }
.omnibox-url em { font-style: normal; color: #ece6f1; }
.omnibox-star { width: 32px; height: 32px; margin-left: auto; }
.cast { width: 34px; height: 26px; margin-left: 35px; }
.toolbar-sep { width: 4px; height: 32px; margin: 0 31px 0 36px; border-radius: 2px; background: #5e5568; }
.avatar { display: grid; place-items: center; width: 40px; height: 40px; border-radius: 50%; background: #6c2799; color: #fff; font-size: 17px; font-weight: 500; }
.kebab { display: flex; flex-direction: column; gap: 5px; margin-left: auto; }
.kebab i { width: 6px; height: 6px; border-radius: 50%; background: #cfc2dc; }

/* application */
.app { display: flex; flex: 1; min-height: 0; background: #fff; }
.line { width: 32px; height: 32px; fill: none; stroke: currentColor; stroke-width: 2; stroke-linecap: round; stroke-linejoin: round; flex: none; }

.sidebar { width: 512px; border-right: 2px solid #e5e7eb; background: #fff; }
.brand { display: flex; align-items: center; height: 186px; padding: 1px 56px 0 32px; border-bottom: 2px solid #e5e7eb; }
.brand-logo { display: grid; place-items: center; width: 80px; height: 80px; border-radius: 24px; background: linear-gradient(135deg, #2f60e6, #2440ac); color: #fff; box-shadow: 0 20px 30px -6px rgba(0, 0, 0, .12), 0 8px 12px -6px rgba(0, 0, 0, .1); }
.brand-logo .line { width: 48px; height: 48px; }
.brand-text { margin-left: 24px; }
.brand-text h1 { font-size: 38.500px; line-height: 56px; font-weight: 700; color: #111827; }
.t-labgig { letter-spacing: .8px; }
.t-labgigs { letter-spacing: .15px; }
.brand-text p { font-size: 23.500px; line-height: 32px; letter-spacing: -.3px; color: #6b7280; }
.brand-collapse { margin-left: auto; color: #0a0a0a; stroke-width: 2.400; }

.nav { display: flex; flex-direction: column; gap: 8px; padding: 32px 25px 0 24px; }
.nav-item { display: flex; align-items: center; height: 80px; padding: 0 23px 0 24px; border-radius: 16px; color: #4b5563; font-size: 27.500px; font-weight: 500; }
.nav-item > .line { width: 40px; height: 40px; margin-right: 24px; color: #9ca3af; }
.nav-item > .line.chev { width: 32px; height: 32px; margin: 0 0 0 auto; }
.nav-item.active { background: #eff5ff; color: #2549d8; letter-spacing: .3px; box-shadow: 0 2px 4px rgba(0, 0, 0, .04); }
.nav-item.active > .line:first-child { color: #2549d8; }

.content { display: flex; flex-direction: column; flex: 1; }
.topbar { position: relative; z-index: 1; display: flex; align-items: center; height: 186px; padding: 1px 64px 0 48px; border-bottom: 2px solid #e5e7eb; background: #fff; box-shadow: 0 2px 6px rgba(0, 0, 0, .06); flex: none; }
.company-logo { width: 80px; height: 80px; }
.co-a, .co-b { font-style: italic; font-weight: 900; font-size: 20px; }
.co-a { fill: #35a5b0; }
.co-b { fill: #f4b942; }
.account { display: flex; align-items: center; margin-left: auto; }
.bell { color: #4b5563; }
.person { color: #666; margin: 0 56px 0 80px; }
.account-text { display: flex; flex-direction: column; width: 188px; padding-top: 2px; white-space: nowrap; }
.account-text strong { font-size: 27px; line-height: 36px; font-weight: 500; color: #0a0a0a; }
.account-text span { font-size: 24px; line-height: 36px; color: #6b7280; }

.main { flex: 1; min-height: 0; padding: 0 88px; background: #f8fafc; }
.frame { height: 100%; padding: 0 4px; border: solid #0a0a0a; border-width: 0 4px; background: #fff; }
.panel { height: 100%; padding: 48px 80px 0 48px; border: solid #e5e5e5; border-width: 0 2px; border-radius: 0 0 16px 16px; background: #fff; }
.filter { display: flex; align-items: center; height: 80px; margin-bottom: 48px; font-size: 27.500px; color: #0a0a0a; }
.filter label { width: 244px; font-weight: 500; letter-spacing: 0; white-space: nowrap; }
.select { display: flex; align-items: center; justify-content: space-between; width: 500px; height: 80px; padding: 0 24px; border: 2px solid #e5e5e5; border-radius: 12px; letter-spacing: -.1px; }
.select .line { opacity: .5; }

.fields { display: flex; flex-direction: column; gap: 16px; overflow: hidden; height: 1190px; }
.field { display: flex; align-items: center; flex: none; height: 156px; margin-left: 16px; padding: 0 24px; border: 2px solid #c3d9fb; border-radius: 16px; background: #fff; box-shadow: 0 2px 4px rgba(0, 0, 0, .06); }
.field-cut { margin-top: -148px; }
.grip { color: #9ca3af; }
.field-text { margin-left: 24px; }
.field-title { display: flex; align-items: center; gap: 18px; height: 48px; padding-bottom: 2px; }
.field-title h3 { font-size: 31.500px; font-weight: 500; letter-spacing: 0; color: #111827; }
.field-title code { font-family: "DejaVu Sans Mono", monospace; font-size: 24px; color: #6b7280; }
.field-text p { font-size: 23.500px; line-height: 32px; letter-spacing: -.02px; color: #6b7280; }
.tight h3 { letter-spacing: -.5px; }
.tight p { letter-spacing: -.2px; }
.order { display: flex; flex-direction: column; gap: 24px; margin: 0 24px 0 auto; color: #0a0a0a; }
.off { opacity: .5; }
.toggle { width: 88px; height: 48px; padding: 4px; border-radius: 24px; background: #272a33; }
.toggle i { display: block; width: 40px; height: 40px; margin-left: 40px; border-radius: 50%; background: #fff; box-shadow: 0 20px 30px -6px rgba(0, 0, 0, .12), 0 8px 12px -8px rgba(0, 0, 0, .1); }
.section { display: flex; align-items: center; flex: none; height: 96px; margin-top: 16px; padding: 0 24px; border-radius: 16px; background: #f3f4f6; }
.section h2 { padding-bottom: 1px; font-size: 31.500px; font-weight: 600; letter-spacing: .25px; color: #111827; }
.badge { display: grid; place-items: center; width: 128px; height: 44px; margin-left: 16px; border: 2px solid #e5e5e5; border-radius: 22px; font-size: 23px; font-weight: 600; letter-spacing: .2px; color: #0a0a0a; }
.section .line { width: 40px; height: 40px; margin-left: auto; color: #0a0a0a; }

.window-shade {
  position: absolute;
  left: 0;
  right: 0;
  bottom: 0;
  height: 80px;
  background: linear-gradient(180deg, rgba(0, 0, 0, 0), rgba(0, 0, 0, .01) 30%, rgba(0, 0, 0, .05) 65%, rgba(0, 0, 0, .115));
  -webkit-mask-image: linear-gradient(90deg, transparent 10px, #000 220px, #000 2800px, transparent 3020px);
  mask-image: linear-gradient(90deg, transparent 10px, #000 220px, #000 2800px, transparent 3020px);
}

/* dock */
.dock {
  display: flex;
  align-items: center;
  width: 2915px;
  height: 90px;
  margin: 6px 0 0 54px;
  padding-left: 4px;
  border: 2px solid rgba(255, 255, 255, .2);
  border-radius: 24px;
  background: linear-gradient(90deg, #1b2420 0, #1c201e 250px, #281d15 650px, #291d15 950px, #252b1c 1150px, #202720 1400px, #22291e 1900px, #26282a 2150px, #2a3026 2350px, #452e1c 2640px, #3c2b1c 2915px);
  background-clip: padding-box;
  box-shadow: 0 0 0 2px rgba(0, 0, 0, .5);
}
.slot { position: relative; display: flex; align-items: center; justify-content: center; width: 71px; height: 86px; flex: none; padding-bottom: 5px; }
.slot svg { width: 56px; height: 54px; overflow: visible; }
.slot svg.big { width: 62px; height: 62px; }
.slot svg.tall { width: 56px; height: 63px; margin-top: -4px; }
.slot svg.mini { width: 64px; height: 64px; }
.slot.open::after { content: ""; position: absolute; left: 31.500px; bottom: 3px; width: 8px; height: 8px; border-radius: 50%; background: #a2a298; }
.dock-sep { width: 2px; height: 66px; margin: 0 15px; background: rgba(255, 255, 255, .28); flex: none; }
.cal-month { font-weight: 600; font-size: 11px; text-anchor: middle; fill: #fff; }
.cal-day { font-size: 31px; letter-spacing: -1px; text-anchor: middle; fill: #2b2b2b; }
.tv { font-weight: 500; font-size: 21px; fill: #fff; }
.office { font-weight: 700; font-size: 15px; text-anchor: middle; fill: #fff; }
.goog { font-size: 5.500px; text-anchor: middle; fill: #5cc4cc; }
```
